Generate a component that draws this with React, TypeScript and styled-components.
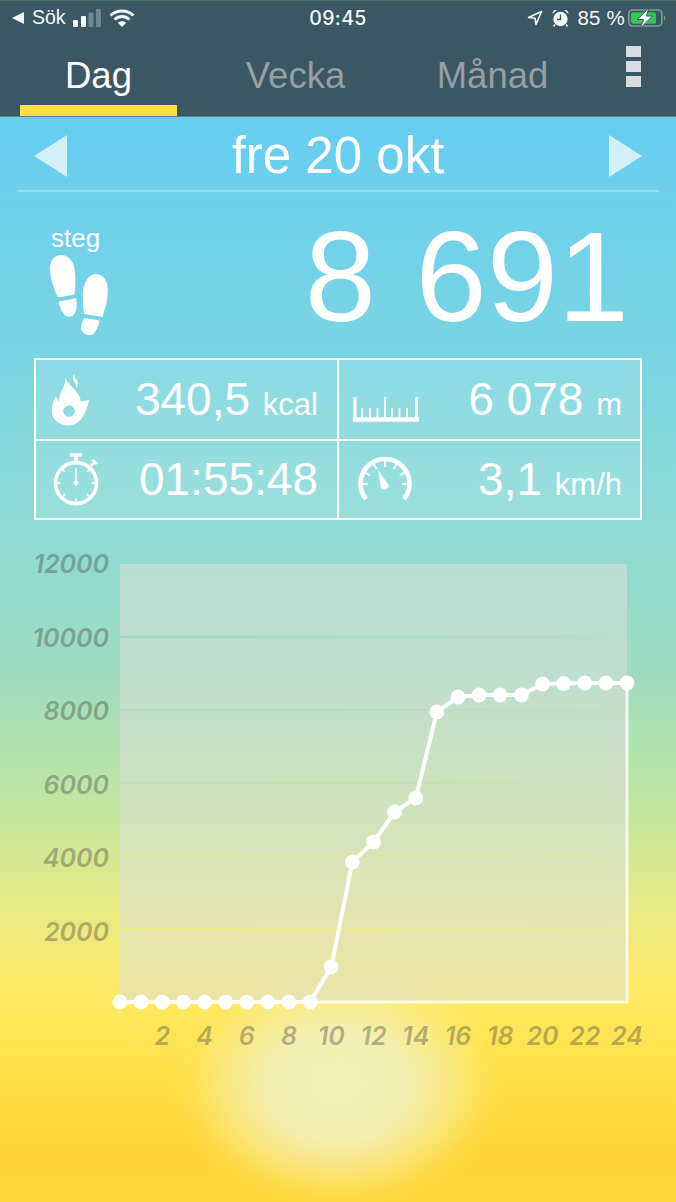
import React from "react";
import styled, { createGlobalStyle } from "styled-components";

const Global = createGlobalStyle`
  html, body { margin: 0; padding: 0; background: #3b5763; }
  #root { width: 676px; height: 1202px; }
`;

const Page = styled.div`
  width: 676px;
  height: 1202px;
  overflow: hidden;
  display: flex;
  flex-direction: column;
  font-family: "Liberation Sans", Arial, sans-serif;
  color: #fff;
`;

const Header = styled.header`
  height: 117px;
  flex: none;
  box-sizing: border-box;
  background: #3b5763;
  border-top: 1px solid #507070;
  border-bottom: 1px solid #5d8494;
`;

const StatusBar = styled.div`
  height: 33px;
  display: grid;
  grid-template-columns: 1fr auto 1fr;
  align-items: center;
  padding: 0 10px 0 12px;
  font-family: Inter, "Liberation Sans", sans-serif;
  font-size: 18.5px;
  font-weight: 400;
  color: #f4f6f7;
`;

const StatusLeft = styled.div`
  display: flex;
  align-items: center;
`;

const StatusRight = styled.div`
  display: flex;
  align-items: center;
  justify-content: flex-end;
`;

const Clock = styled.div`
  font-weight: 500;
  font-size: 19.5px;
  letter-spacing: 0.4px;
  margin-left: -2px;
`;

const SearchLabel = styled.span`
  margin: 0 7px 0 8px;
  font-family: "Liberation Sans", sans-serif;
  font-size: 19.5px;
`;

const WifiGap = styled.span`
  width: 7px;
`;

const Battery = styled.span`
  margin-left: 3px;
  display: flex;
`;

const Percent = styled.span`
  margin: 0 0 0 8px;
  font-family: "Liberation Sans", sans-serif;
  font-size: 20.5px;
  letter-spacing: 0.2px;
  white-space: pre;
`;

const TabBar = styled.nav`
  height: 82px;
  display: flex;
  padding: 0 35px 0 20px;
  gap: 40px;
`;

const Tab = styled.div<{ $active?: boolean }>`
  width: 157px;
  height: 71px;
  text-align: center;
  font-size: 36.5px;
  line-height: 84px;
  color: ${(p) => (p.$active ? "#ffffff" : "#979fa2")};
  border-bottom: ${(p) => (p.$active ? "11px solid #ffdf45" : "11px solid transparent")};
`;

const MenuButton = styled.div`
  margin-left: auto;
  padding-top: 12px;
  display: flex;
  flex-direction: column;
  gap: 4px;
`;

const MenuSquare = styled.span`
  width: 15px;
  height: 11px;
  background: #d8dcdf;
`;

const Main = styled.main`
  flex: 1;
  display: flex;
  flex-direction: column;
  background:
    radial-gradient(ellipse 168px 128px at 338px 968px,
      rgba(242, 240, 182, 1) 0%, rgba(242, 240, 182, 0.96) 42%, rgba(245, 238, 160, 0.6) 68%, rgba(250, 232, 120, 0.2) 88%, rgba(255, 230, 90, 0) 100%),
    linear-gradient(180deg,
      #66cdf0 0px, #7ad5e2 243px, #8fdad2 423px, #9edcc0 560px,
      #c6e69d 700px, #e6ea84 790px, #ffea62 880px, #ffdf47 960px, #ffd536 1030px, #ffd636 1085px);
`;

const DateRow = styled.div`
  height: 75px;
  margin: 0 17px;
  flex: none;
  box-sizing: border-box;
  padding: 4px 17px 0;
  display: flex;
  align-items: center;
  justify-content: space-between;
  border-bottom: 2px solid rgba(255, 255, 255, 0.28);
`;

const DateText = styled.div`
  font-size: 51px;
  line-height: 75px;
`;

const StepRow = styled.section`
  height: 166px;
  flex: none;
  box-sizing: border-box;
  padding: 0 47px 0 49px;
  display: flex;
  justify-content: space-between;
`;

const StepLabelGroup = styled.div`
  display: flex;
  flex-direction: column;
  align-items: flex-start;
  padding-top: 31px;
`;

const StepLabel = styled.div`
  font-size: 26px;
  line-height: 30px;
  margin-left: 2px;
`;

const StepCount = styled.div`
  font-size: 128px;
  line-height: 170px;
  word-spacing: 4px;
  white-space: pre;
`;

const StatsGrid = styled.section`
  margin: 0 34px;
  height: 162px;
  flex: none;
  box-sizing: border-box;
  display: grid;
  grid-template-columns: 301px 1fr;
  grid-template-rows: 1fr 1fr;
  border: 2.5px solid #fff;
  background: rgba(255, 255, 255, 0.13);
`;

const StatCell = styled.div<{ $right?: boolean; $bottom?: boolean }>`
  display: flex;
  align-items: center;
  justify-content: space-between;
  padding: 0 ${(p) => (p.$right ? "18px" : "19px")} 0 ${(p) => (p.$right ? "15px" : "16px")};
  border-left: ${(p) => (p.$right ? "2.5px solid #fff" : "none")};
  border-top: ${(p) => (p.$bottom ? "2.5px solid #fff" : "none")};
`;

const StatValue = styled.div`
  font-size: 46px;
  padding-bottom: 2px;
  white-space: pre;
`;

const StatUnit = styled.span`
  font-size: 31px;
`;

const IconSlot = styled.span<{ $left?: number; $top?: number }>`
  display: flex;
  margin-left: ${(p) => p.$left ?? 0}px;
  padding-top: ${(p) => p.$top ?? 0}px;
`;

const ChartFrame = styled.section`
  margin-top: 20px;
  flex: none;
  height: 520px;
`;

const ChartSvg = styled.svg`
  display: block;
`;

const AxisText = styled.text`
  font-family: Inter, "Liberation Sans", sans-serif;
  font-size: 25px;
  font-weight: 600;
  font-style: italic;
  fill: rgba(70, 68, 68, 0.4);
`;

const Triangle = ({ right }: { right?: boolean }) => (
  <svg width="33" height="42" viewBox="0 0 33 42">
    <polygon points={right ? "0,0 33,21 0,42" : "33,0 0,21 33,42"} fill="#fff" fillOpacity="0.7" />
  </svg>
);

const SignalIcon = () => (
  <svg width="29" height="18" viewBox="0 0 29 18">
    <rect x="0" y="11" width="5" height="7" rx="1" fill="#f4f6f7" />
    <rect x="8" y="7" width="5" height="11" rx="1" fill="#f4f6f7" />
    <rect x="15.5" y="3.5" width="5" height="14.5" rx="1" fill="#6e8790" />
    <rect x="23" y="0" width="5" height="18" rx="1" fill="#6e8790" />
  </svg>
);

const WifiIcon = () => (
  <svg width="26" height="18" viewBox="0 0 26 18" fill="none" stroke="#f4f6f7" strokeWidth="3">
    <path d="M1.5 6.5 C8 0.5 18 0.5 24.5 6.5" />
    <path d="M5.5 10.5 C10 6.5 16 6.5 20.5 10.5" />
    <path d="M13 18 L8.8 13.8 C11 11.8 15 11.8 17.2 13.8 Z" fill="#f4f6f7" stroke="none" />
  </svg>
);

const BackIcon = () => (
  <svg width="12" height="12" viewBox="0 0 12 12">
    <polygon points="12,0 0,6 12,12" fill="#f4f6f7" />
  </svg>
);

const LocationIcon = () => (
  <svg width="16" height="16" viewBox="0 0 16 16" fill="none" stroke="#f4f6f7" strokeWidth="1.6" strokeLinejoin="round">
    <path d="M14.5 1.5 L1.5 7.5 L8 8.2 L9 14.5 Z" />
  </svg>
);

const AlarmIcon = () => (
  <svg width="17" height="18" viewBox="0 0 17 18" style={{ marginLeft: 9 }}>
    <path d="M0.5 5 C0.5 2 2.5 0.5 5 1 Z M16.5 5 C16.5 2 14.5 0.5 12 1 Z" fill="#f4f6f7" />
    <circle cx="8.5" cy="10" r="7.2" fill="#f4f6f7" />
    <path d="M8.5 5.5 V10.5 H5" fill="none" stroke="#3b5763" strokeWidth="1.3" />
    <path d="M3 15.5 L1.5 17.5 M14 15.5 L15.5 17.5" stroke="#f4f6f7" strokeWidth="1.5" />
  </svg>
);

const BatteryIcon = () => (
  <svg width="38" height="20" viewBox="0 0 38 20">
    <rect x="0.8" y="2" width="33" height="16" rx="4" fill="none" stroke="#87999f" strokeWidth="1.6" />
    <rect x="3" y="4.3" width="25" height="11.4" rx="2" fill="#31c94f" />
    <path d="M36 7.5 C37.5 8 37.5 12 36 12.5 Z" fill="#87999f" />
    <path d="M21 -0.5 L9.5 11.5 H15.5 L12 20.5 L24.5 8 H18.5 Z" fill="#fff" stroke="#3b5763" strokeWidth="1" />
  </svg>
);

const FeetIcon = () => (
  <svg width="60" height="82" viewBox="48 254 60 82" fill="#fff" style={{ marginTop: 1 }}>
    <path d="M60 255 C52 255 48 263 49 271 C50 281 53 290 57 297.5 L73.5 294.5 C74.5 288 74.8 280 74 272 C73.3 262 68 255 60 255 Z" />
    <path d="M57.7 301.7 L75 298 C76 302 75.8 308 75 311 C73 316 69 317.5 66 316.5 C62 315 59 308 57.7 301.7 Z" />
    <path d="M95 274 C88 274 83 282 82 291 C81.5 299 82 308 83.3 314 L101.5 317 C104 309 107 300 106.8 289 C106.5 281 102 274 95 274 Z" />
    <path d="M83 318 L98.5 320.5 C97.5 326 95.5 332 91 334.5 C86 336.5 80.5 333 80 328 C80 325 81.5 321 83 318 Z" />
  </svg>
);

const FireIcon = () => (
  <svg width="38" height="52" viewBox="53 373 38 52" fill="#fff">
    <path
      fillRule="evenodd"
      d="M66.5 377 C69 384 76 387 79 393 C81 396 81.5 398 81.5 400 C84 400.5 87 400 90 398.5 C89 404 87.5 408 85.3 413 C82 420 76 424.5 69.5 424.5 C60 424.5 52.7 418 52.7 410 C52.7 404 54.5 399 57 395 C58 397 58.5 399 60 400.5 C60 395 62 391 64 387 C65.5 384 66.5 381 66.5 377 Z M70 404.5 C66.8 404.5 64.3 407 64.3 410 C64.3 413 66.8 415.7 70 415.7 C73.2 415.7 75.7 413 75.7 410 C75.7 407 73.2 404.5 70 404.5 Z"
    />
    <path d="M75 373 C73.5 376 73.5 378 75.5 381 C77 383 77.5 385 77 387 C79.5 384.5 79 381 77.5 379 C76 377 75.5 375 75 373 Z" />
  </svg>
);

const StopwatchIcon = () => {
  const ticks = [45, 90, 135, 180, 225, 270, 315];
  return (
    <svg width="48" height="54" viewBox="0 0 48 54" fill="none" stroke="#fff">
      <circle cx="23" cy="30" r="20.5" strokeWidth="3.8" />
      <path d="M17 2 H29" strokeWidth="3.5" />
      <path d="M23 3 V9" strokeWidth="3.8" />
      <path d="M38 13 L42 9" strokeWidth="2.8" />
      <path d="M39.5 7 L44 11" strokeWidth="2.8" />
      <path d="M23 15 V30" strokeWidth="1.4" />
      <circle cx="23" cy="30" r="2.4" fill="#fff" stroke="none" />
      {ticks.map((a) => (
        <line key={a} x1="23" y1="11.5" x2="23" y2="14.5" strokeWidth="1.6" transform={`rotate(${a} 23 30)`} />
      ))}
    </svg>
  );
};

const RulerIcon = () => {
  const shorts = [9, 17, 24.5, 39, 46.5, 54];
  const talls = [2, 32, 63.5];
  return (
    <svg width="66" height="25" viewBox="0 0 66 25" fill="none" stroke="#fff">
      <path d="M0 22.5 H66" strokeWidth="4.5" />
      {talls.map((x) => (
        <line key={x} x1={x} x2={x} y1="0" y2="24" strokeWidth={x === 32 ? 2 : 3} />
      ))}
      {shorts.map((x) => (
        <line key={x} x1={x} x2={x} y1="11" y2="24" strokeWidth="1.8" />
      ))}
    </svg>
  );
};

const GaugeIcon = () => {
  const ticks = [-90, -60, -30, 0, 30, 60, 90];
  return (
    <svg width="56" height="46" viewBox="0 0 56 46" fill="none" stroke="#fff">
      <path d="M9 42 A24.5 24.5 0 1 1 47 42" strokeWidth="4.6" />
      {ticks.map((a) => (
        <line key={a} x1="28" y1="4" x2="28" y2="10" strokeWidth="2" transform={`rotate(${a} 28 27)`} />
      ))}
      <path d="M21 13 L24 31 A4.2 4.2 0 0 0 31.5 28 Z" fill="#fff" stroke="none" />
    </svg>
  );
};

const STEP = 21.125;
const LEFT = 120;
const pointYs = [
  1002, 1002, 1002, 1002, 1002, 1002, 1002, 1002, 1002, 1002, 967, 862, 842, 812, 798, 712, 697, 695, 695, 695, 684,
  683.5, 683, 683, 683,
];
const points = pointYs.map((y, i) => ({ x: LEFT + STEP * i, y }));
const yLabels = [12000, 10000, 8000, 6000, 4000, 2000];
const bands = [0, 1, 2, 3, 4, 5];
const PANEL = "rgb(220, 224, 216)";

const Chart = () => (
  <ChartSvg width="676" height="520" viewBox="0 540 676 520">
    <defs>
      <linearGradient id="gridFade" x1="0" x2="1" y1="0" y2="0">
        <stop offset="0" stopColor={PANEL} stopOpacity="0.08" />
        <stop offset="0.55" stopColor={PANEL} stopOpacity="0.2" />
        <stop offset="1" stopColor={PANEL} stopOpacity="0.45" />
      </linearGradient>
    </defs>
    {bands.map((i) => (
      <React.Fragment key={i}>
        <rect x={LEFT} y={564 + 73 * i + (i ? 1.2 : 0)} width="507" height={i ? 70.6 : 71.8} fill={PANEL} fillOpacity="0.54" />
        {i > 0 && <rect x={LEFT} y={562.8 + 73 * i} width="507" height="2.4" fill="url(#gridFade)" />}
      </React.Fragment>
    ))}
    <path d="M310 1002 H627 V683" fill="none" stroke="#fff" strokeOpacity="0.78" strokeWidth="3" />
    {yLabels.map((v, i) => (
      <AxisText key={v} x="109" y={573 + 73.6 * i} textAnchor="end">
        {v}
      </AxisText>
    ))}
    {bands
      .concat([6, 7, 8, 9, 10, 11])
      .map((i) => (i + 1) * 2)
      .map((h) => (
        <AxisText key={h} x={LEFT + STEP * h} y="1045" textAnchor="middle">
          {h}
        </AxisText>
      ))}
    <polyline
      points={points.map((p) => `${p.x},${p.y}`).join(" ")}
      fill="none"
      stroke="#fff"
      strokeWidth="4"
      strokeLinejoin="round"
    />
    {points.map((p) => (
      <circle key={p.x} cx={p.x} cy={p.y} r="7.4" fill="#fff" />
    ))}
  </ChartSvg>
);

export default function App() {
  return (
    <Page>
      <Global />
      <Header>
        <StatusBar>
          <StatusLeft>
            <BackIcon />
            <SearchLabel>Sök</SearchLabel>
            <SignalIcon />
            <WifiGap />
            <WifiIcon />
          </StatusLeft>
          <Clock>09:45</Clock>
          <StatusRight>
            <LocationIcon />
            <AlarmIcon />
            <Percent>85 %</Percent>
            <Battery>
              <BatteryIcon />
            </Battery>
          </StatusRight>
        </StatusBar>
        <TabBar>
          <Tab $active>Dag</Tab>
          <Tab>Vecka</Tab>
          <Tab>Månad</Tab>
          <MenuButton>
            <MenuSquare />
            <MenuSquare />
            <MenuSquare />
          </MenuButton>
        </TabBar>
      </Header>
      <Main>
        <DateRow>
          <Triangle />
          <DateText>fre 20 okt</DateText>
          <Triangle right />
        </DateRow>
        <StepRow>
          <StepLabelGroup>
            <StepLabel>steg</StepLabel>
            <FeetIcon />
          </StepLabelGroup>
          <StepCount>8 691</StepCount>
        </StepRow>
        <StatsGrid>
          <StatCell>
            <FireIcon />
            <StatValue>
              340,5 <StatUnit>kcal</StatUnit>
            </StatValue>
          </StatCell>
          <StatCell $right>
            <IconSlot $left={-1} $top={20}>
              <RulerIcon />
            </IconSlot>
            <StatValue>
              6 078 <StatUnit>m</StatUnit>
            </StatValue>
          </StatCell>
          <StatCell $bottom>
            <IconSlot $left={1}>
              <StopwatchIcon />
            </IconSlot>
            <StatValue>01:55:48</StatValue>
          </StatCell>
          <StatCell $right $bottom>
            <IconSlot $left={3}>
              <GaugeIcon />
            </IconSlot>
            <StatValue>
              3,1 <StatUnit>km/h</StatUnit>
            </StatValue>
          </StatCell>
        </StatsGrid>
        <ChartFrame>
          <Chart />
        </ChartFrame>
      </Main>
    </Page>
  );
}
